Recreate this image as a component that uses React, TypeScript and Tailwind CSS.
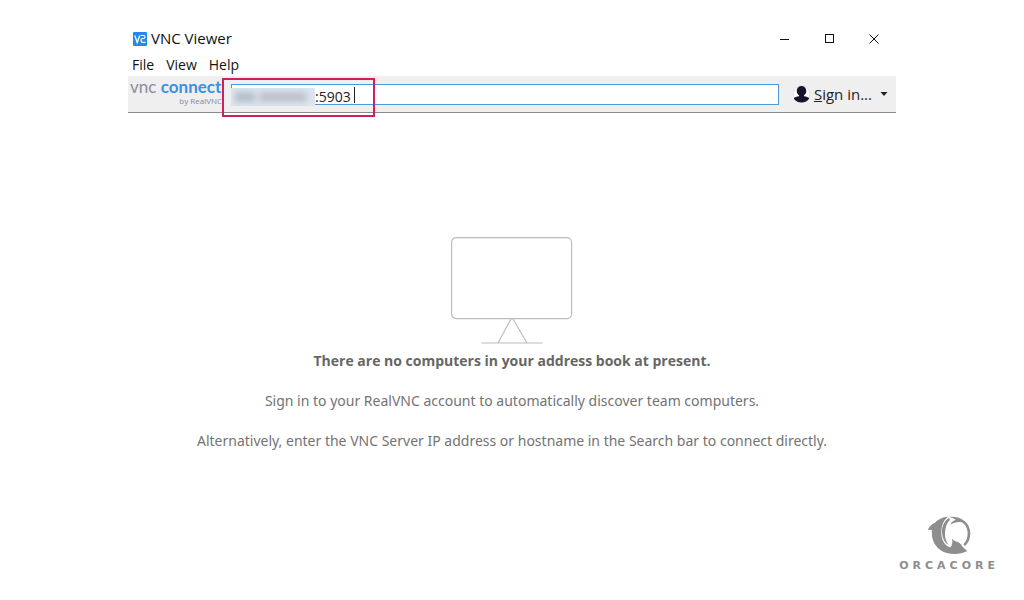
import { useState } from "react";

const menuItems = ["File", "View", "Help"];

function AppIcon() {
  return (
    <svg viewBox="0 0 14 14" className="size-3.5" aria-hidden="true">
      <rect width="14" height="14" rx="1" fill="#2489ec" />
      <path d="M1.8 3.5l2.4 7 2.6-7" fill="none" stroke="#fff" strokeWidth="1.3" />
      <path
        d="M7.5 3.5h3c2 0 2 3 0 3H9.7c-2.200 0-2.200 3.800 0 3.800h2.800"
        fill="none"
        stroke="#fff"
        strokeWidth="1.2"
      />
    </svg>
  );
}

function WindowControls() {
  return (
    <div className="flex items-center text-[#111]">
      <button aria-label="Minimize" className="flex h-7 w-11 items-center justify-center">
        <svg viewBox="0 0 10 10" className="size-2.5" stroke="currentColor" fill="none">
          <path d="M0 5.5h9" />
        </svg>
      </button>
      <button aria-label="Maximize" className="flex h-7 w-[45px] items-center justify-center">
        <svg viewBox="0 0 10 10" className="size-2.5" stroke="currentColor" fill="none">
          <rect x="0.5" y="0.5" width="8" height="8" />
        </svg>
      </button>
      <button aria-label="Close" className="flex h-7 w-11 items-center justify-center">
        <svg viewBox="0 0 10 10" className="size-2.5" stroke="currentColor" fill="none">
          <path d="M0.5 0.5l9 9M9.5 0.5l-9 9" />
        </svg>
      </button>
    </div>
  );
}

function ConnectLogo() {
  return (
    <div className="w-[94px] shrink-0 pb-1 pl-0.5 whitespace-nowrap">
      <p className="font-['Lato',sans-serif] text-[17px] leading-4">
        <span className="text-[#8d8b9c]">vnc</span>{" "}
        <span className="font-bold text-[#3a8fe6]">connect</span>
      </p>
      <p className="text-right text-[8px] leading-[11px] text-[#8886a0]">by RealVNC</p>
    </div>
  );
}

function AddressBar() {
  const [address, setAddress] = useState(":5903");

  return (
    <div className="relative ml-[9px] flex-1">
      <input
        aria-label="Search bar"
        value={address}
        onChange={(e) => setAddress(e.target.value)}
        className="block h-[21px] w-full border border-[#4a9ae0] bg-white pt-1 pl-[83px] text-sm leading-4 text-[#222] outline-none"
      />
      {/* hidden part of the address */}
      <div className="absolute top-1 left-0 flex h-[18px] w-[84px] items-center overflow-hidden bg-[#dde6f0]">
        <div className="ml-1 h-2.5 w-5 bg-[#b3bcc8] blur-[3px]"></div>
        <div className="ml-1 h-2.5 w-12 bg-[#bcc1ca] blur-[3px]"></div>
      </div>
      <div className="absolute top-[3px] left-[123px] h-4 w-px bg-[#222]"></div>
      <div className="absolute -top-1.5 -left-[9px] h-[39px] w-[153px] border-2 border-[#cf1f61]"></div>
    </div>
  );
}

function SignInButton() {
  return (
    <button className="mr-2 ml-3.5 flex items-center text-[15px] leading-5 text-[#222]">
      <svg viewBox="0 0 17 18" className="mr-1 h-[18px] w-[17px]" aria-hidden="true">
        <circle cx="8.5" cy="9" r="8.2" fill="#fff" stroke="#d4d4d8" strokeWidth="0.6" />
        <ellipse cx="8.5" cy="6" rx="4.8" ry="5" fill="#16132e" />
        <path
          d="M6 9h5v2.200c2.400.2 4.400.8 5.200 2.200-1.600 2.500-4.200 4-7.700 4S2.400 15.900.8 13.400c.8-1.400 2.800-2 5.200-2.200z"
          fill="#16132e"
        />
      </svg>
      <span>
        <span className="underline">S</span>ign in...
      </span>
      <svg viewBox="0 0 8 4" className="ml-2 h-1 w-2" aria-hidden="true">
        <path d="M0.5 0h7L4 4z" fill="#222" />
      </svg>
    </button>
  );
}

function MonitorDrawing() {
  return (
    <svg
      viewBox="0 0 122 108"
      className="h-[108px] w-[122px]"
      fill="none"
      stroke="#bcbcbc"
      strokeWidth="1.2"
      aria-hidden="true"
    >
      <rect x="0.6" y="0.6" width="120" height="81" rx="4.5" />
      <path d="M60 82L47 106M62 82l14 24M30.5 106h61" />
    </svg>
  );
}

function OrcaLogo() {
  return (
    <div className="flex flex-col items-center text-[#8e8e8e]">
      <svg viewBox="108 34 132 114" className="h-[38px] w-11" fill="currentColor" aria-hidden="true">
        <path d="M171 36c-17 1-31 8-40 19-7 2-15 8-21 22 5-2 9-2 13 0-4 33 15 60 45 68 20 5 43 3 61-5-12-1-22-5-30-12-29 8-46-13-48-40-1-22 5-41 20-52z" />
        <path d="M174 40c-15 10-22 26-21 44 1 17 8 30 20 38-8-12-12-25-11-38 1-17 6-30 15-38z" />
        <path d="M175 37c29-4 63 13 63 50 0 15-6 28-16 37l-5-5c8-8 13-19 13-32 0-16-7-28-18-34-12-2-23 0-34 7 2-7 8-12 16-15-6-4-12-6-19-8z" />
        <path d="M183 101c4 7 10 10 18 11 9 4 12 13 18 19 4 4 8 6 11 6-17 6-39 4-54-4 7-9 10-19 7-32z" />
      </svg>
      <p className="mt-1 font-['DejaVu_Sans',sans-serif] text-[11px] leading-4 font-bold tracking-[4px]">
        ORCACORE
      </p>
    </div>
  );
}

export default function App() {
  return (
    <div className="flex min-h-screen flex-col bg-white font-['Open_Sans','Noto_Sans',sans-serif]">
      <div className="mx-auto w-3/4 pt-[25px]">
        <header>
          <div className="flex h-7 items-center justify-between pl-[5px]">
            <div className="flex items-center gap-1">
              <AppIcon />
              <h1 className="pb-0.5 text-[15px] text-[#111]">VNC Viewer</h1>
            </div>
            <WindowControls />
          </div>
          <nav className="flex h-[23px] items-center gap-3 pl-1 text-sm text-[#111]">
            {menuItems.map((item) => (
              <button key={item}>{item}</button>
            ))}
          </nav>
          <div className="flex h-[37px] items-center border-b border-[#8a8a8a] bg-[#efefef]">
            <ConnectLogo />
            <AddressBar />
            <SignInButton />
          </div>
        </header>

        <main className="flex flex-col items-center pt-[124px] text-center text-sm leading-5 text-[#737373]">
          <MonitorDrawing />
          <p className="mt-1.5 font-bold text-[#666]">There are no computers in your address book at present.</p>
          <div className="mt-5 space-y-5 font-['Noto_Sans',sans-serif]">
            <p>Sign in to your RealVNC account to automatically discover team computers.</p>
            <p>Alternatively, enter the VNC Server IP address or hostname in the Search bar to connect directly.</p>
          </div>
        </main>
      </div>

      <footer className="mt-auto flex justify-end pr-[25px] pb-[26px]">
        <OrcaLogo />
      </footer>
    </div>
  );
}
